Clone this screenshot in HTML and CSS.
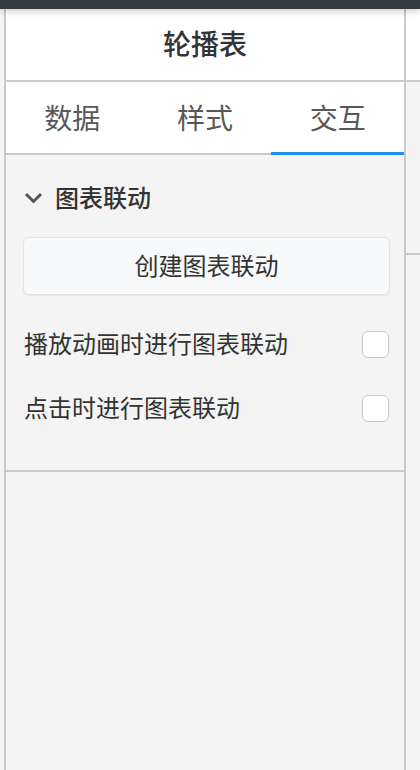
FILE: index.html
```html
<!DOCTYPE html>
<html lang="zh-CN">
<head>
  <meta charset="UTF-8" />
  <meta name="viewport" content="width=device-width, initial-scale=1.0">
  <title>轮播表</title>
  <link rel="stylesheet" href="styles.css">
</head>
<body>
  <div class="topbar"></div>
  <div class="main">
    <div class="edge-left"></div>

    <div class="panel">
      <div class="panel-title">轮播表</div>

      <div class="tabs">
        <div class="tab">数据</div>
        <div class="tab">样式</div>
        <div class="tab active">交互</div>
      </div>

      <div class="section">
        <div class="section-head">
          <svg class="chevron" width="19" height="12" viewBox="0 0 19 12">
            <polyline points="2,2 9.5,9.5 17,2" fill="none" stroke="#555" stroke-width="3" />
          </svg>
          <span class="label">图表联动</span>
        </div>

        <button class="btn">创建图表联动</button>

        <div class="row">
          <span class="label">播放动画时进行图表联动</span>
          <span class="check"></span>
        </div>
        <div class="row">
          <span class="label">点击时进行图表联动</span>
          <span class="check"></span>
        </div>
      </div>
    </div>

    <div class="edge-right">
      <div class="edge-top"></div>
      <div class="edge-mid"></div>
    </div>
  </div>
</body>
</html>
```

FILE: styles.css
```css
html, body {
  margin: 0;
  padding: 0;
  height: 770px;
  overflow: hidden;
  background-color: #F4F4F4;
  color: #333333;
  font-family: 'Noto Sans', 'Noto Sans CJK SC', sans-serif;
}
body {
  display: flex;
  flex-direction: column;
}
.topbar {
  height: 9px;
  background-color: #353C40;
  box-shadow: 0 2px 7px rgba(0, 0, 0, 0.22);
  position: relative;
  z-index: 2;
}
.main {
  flex: 1;
  display: flex;
}
.edge-left {
  width: 4px;
  background-color: #F4F4F4;
}
.panel {
  width: 398px;
  border-left: 2px solid #CACACA;
  border-right: 2px solid #CACACA;
  display: flex;
  flex-direction: column;
}
.panel-title {
  height: 71px;
  line-height: 71px;
  text-align: center;
  font-size: 28px;
  font-weight: 500;
  color: #333333;
  background-color: #FFFFFF;
  border-bottom: 2px solid #CACACA;
}
.tabs {
  display: flex;
  height: 71px;
  background-color: #FFFFFF;
  border-bottom: 2px solid #CACACA;
}
.tab {
  flex: 1;
  display: flex;
  align-items: center;
  justify-content: center;
  font-size: 28px;
  color: #585858;
  height: 70px;
  margin-bottom: -2px;
  border-bottom: 3px solid transparent;
}
.tab.active {
  border-bottom-color: #1E8FEA;
}
.section {
  padding: 28px 14px 30px 17px;
  border-bottom: 2px solid #CACACA;
}
.section-head {
  display: flex;
  align-items: center;
  height: 30px;
  font-size: 24px;
  font-weight: 500;
  color: #333333;
}
.label {
  padding-bottom: 4px;
}
.chevron {
  margin-left: 1px;
  margin-right: 12px;
}
.btn {
  display: block;
  width: 100%;
  height: 58px;
  margin-top: 24px;
  margin-bottom: 17px;
  padding: 0 0 4px;
  font-family: inherit;
  font-size: 24px;
  color: #333333;
  background-color: #F8F9FA;
  border: 1.5px solid #E2E2E2;
  border-radius: 6px;
  box-shadow: 0 1px 2px rgba(0, 0, 0, 0.06);
}
.row {
  height: 64px;
  display: flex;
  align-items: center;
  justify-content: space-between;
  font-size: 24px;
  color: #333333;
}
.row .label {
  margin-left: 1px;
}
.check {
  width: 25px;
  height: 25px;
  margin-right: 1px;
  background-color: #FFFFFF;
  border: 1.5px solid #C8C8C8;
  border-radius: 6px;
}
.edge-right {
  flex: 1;
}
.edge-top {
  height: 71px;
  background-color: #FFFFFF;
  border-bottom: 2px solid #CACACA;
}
.edge-mid {
  height: 171px;
  border-bottom: 2px solid #CACACA;
}
```
